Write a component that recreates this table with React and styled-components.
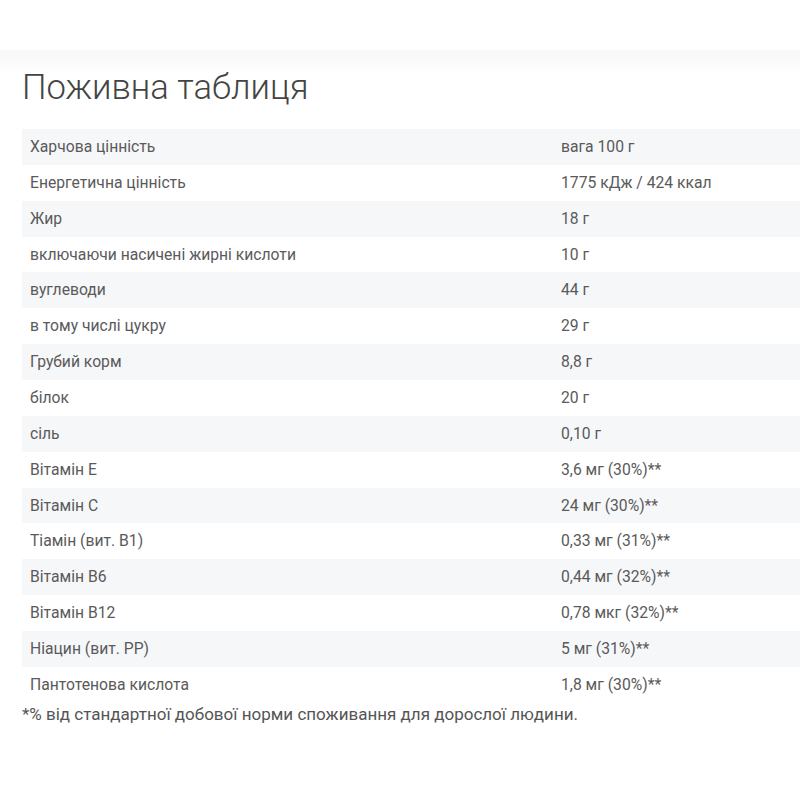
import React from "react";
import styled, { createGlobalStyle } from "styled-components";

const GlobalStyle = createGlobalStyle`
  html, body {
    margin: 0;
    padding: 0;
    background: #fff;
    overflow: hidden;
  }
  body {
    font-family: Roboto, "Liberation Sans", Arial, sans-serif;
    color: #555;
  }
`;

const TopBar = styled.div`
  height: 50px;
  background: #fff;
`;

const Shade = styled.div`
  height: 24px;
  background: linear-gradient(#f7f7f7, #fff);
`;

const Section = styled.section`
  padding: 0 0 0 22px;
  margin-top: -24px;
`;

const Title = styled.h2`
  margin: 0;
  padding-top: 17px;
  font-size: 34.6px;
  font-weight: 300;
  line-height: 40px;
  color: #444;
`;

const Table = styled.table`
  width: 100%;
  margin-top: 22px;
  border-collapse: collapse;
  font-size: 15.7px;
  color: #5a5a5a;
`;

const Row = styled.tr`
  background: ${(p) => (p.$striped ? "#f6f7f9" : "#fff")};
`;

const Cell = styled.td`
  padding: 7px 8px;
  line-height: 21.86px;
  vertical-align: middle;
  white-space: nowrap;
  width: ${(p) => (p.$label ? "515px" : "auto")};
`;

const Note = styled.p`
  margin: 0;
  font-size: 17px;
  line-height: 22px;
  color: #555;
`;

const rows = [
  ["Харчова цінність", "вага 100 г"],
  ["Енергетична цінність", "1775 кДж / 424 ккал"],
  ["Жир", "18 г"],
  ["включаючи насичені жирні кислоти", "10 г"],
  ["вуглеводи", "44 г"],
  ["в тому числі цукру", "29 г"],
  ["Грубий корм", "8,8 г"],
  ["білок", "20 г"],
  ["сіль", "0,10 г"],
  ["Вітамін Е", "3,6 мг (30%)**"],
  ["Вітамін С", "24 мг (30%)**"],
  ["Тіамін (вит. B1)", "0,33 мг (31%)**"],
  ["Вітамін В6", "0,44 мг (32%)**"],
  ["Вітамін В12", "0,78 мкг (32%)**"],
  ["Ніацин (вит. PP)", "5 мг (31%)**"],
  ["Пантотенова кислота", "1,8 мг (30%)**"],
];

export default function App() {
  return (
    <>
      <GlobalStyle />
      <TopBar />
      <Shade />
      <Section>
        <Title>Поживна таблиця</Title>
        <Table>
          <tbody>
            {rows.map(([name, value], i) => (
              <Row key={name} $striped={i % 2 === 0}>
                <Cell $label>{name}</Cell>
                <Cell>{value}</Cell>
              </Row>
            ))}
          </tbody>
        </Table>
        <Note>*% від стандартної добової норми споживання для дорослої людини.</Note>
      </Section>
    </>
  );
}
